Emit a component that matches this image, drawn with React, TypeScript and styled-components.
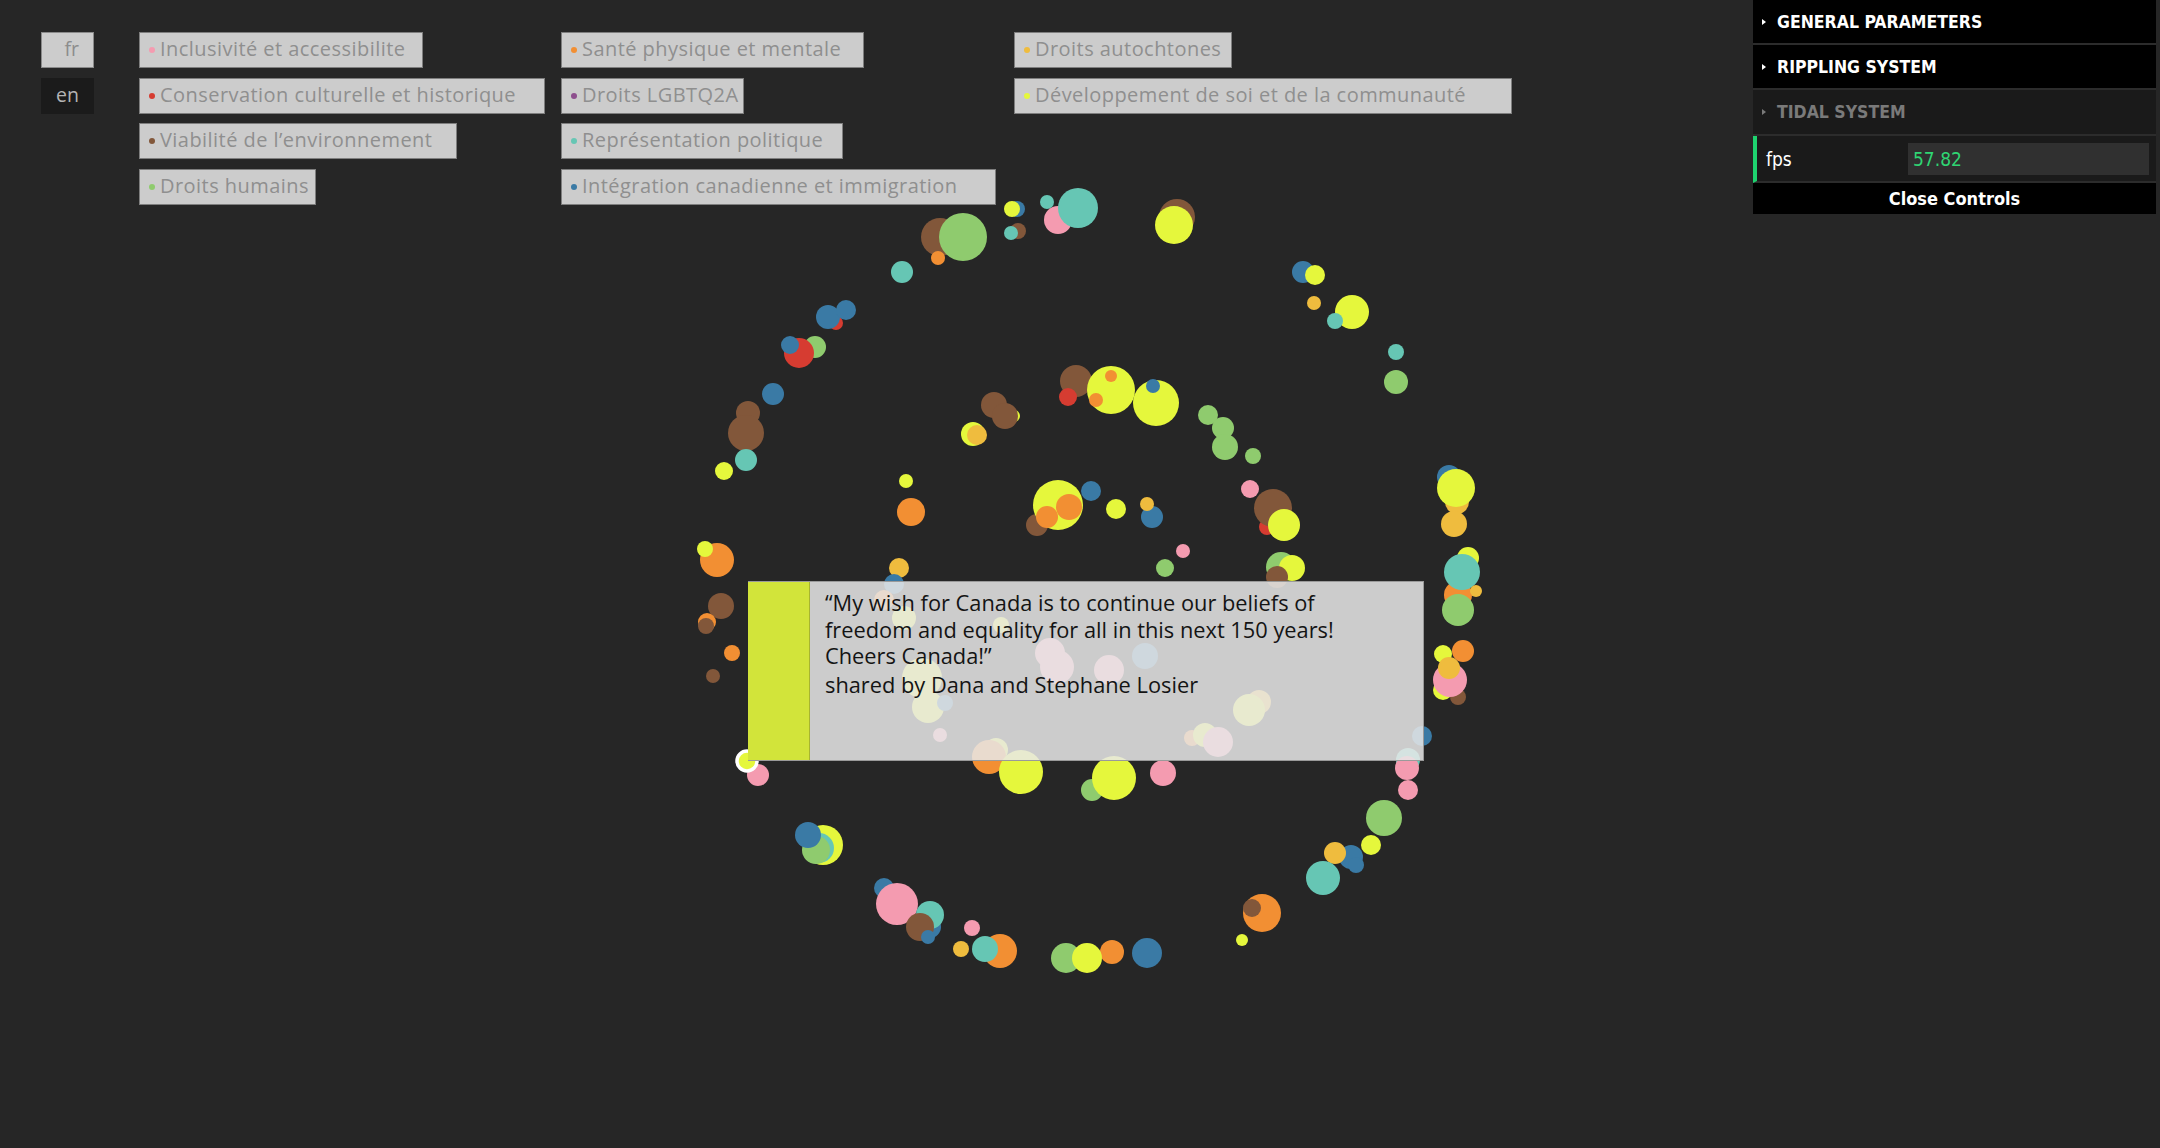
import React from 'react';
import styled, { createGlobalStyle } from 'styled-components';

// --- Global ---

const GlobalStyle = createGlobalStyle`
  html, body {
    margin: 0;
    padding: 0;
    background: #262626;
  }
  * { box-sizing: border-box; }
`;

// --- Palette used by the categories and bubbles ---

const C: Record<string, string> = {
  Y: '#e5f73c', // développement
  P: '#f49bb0', // inclusivité
  T: '#66c6b4', // représentation
  G: '#8fcb6e', // droits humains
  B: '#3a7aa5', // intégration
  N: '#82573a', // environnement
  O: '#f28f33', // santé
  A: '#efbc3e', // autochtones
  R: '#d63c31', // conservation
  V: '#8e4f8e', // lgbtq2a
};

// --- Layout ---

const Page = styled.main`
  position: relative;
  width: 100%;
  height: 100vh;
  overflow: hidden;
  background: #262626;
`;

const TopBar = styled.header`
  position: relative;
  z-index: 2;
  display: flex;
  align-items: flex-start;
  gap: 45px;
  padding: 32px 0 0 41px;
`;

const LangColumn = styled.nav`
  display: flex;
  flex-direction: column;
  gap: 10px;
`;

const LangButton = styled.button<{ $active?: boolean }>`
  width: 53px;
  height: 36px;
  padding: 0 14px 3px 0;
  text-align: right;
  font-family: 'Open Sans', sans-serif;
  font-size: 19.5px;
  border: 1px solid ${(p) => (p.$active ? '#1b1b1b' : '#8a8a8a')};
  background: ${(p) => (p.$active ? '#1b1b1b' : '#cccccc')};
  color: ${(p) => (p.$active ? '#b4b4b4' : '#8c8c8c')};
`;

const TagRow = styled.div`
  display: flex;
`;

const TagColumn = styled.div<{ $width?: number }>`
  display: flex;
  flex-direction: column;
  align-items: flex-start;
  gap: 9.7px;
  width: ${(p) => (p.$width ? `${p.$width}px` : 'auto')};
  flex: none;
`;

const Tag = styled.button<{ $w: number }>`
  display: flex;
  align-items: center;
  gap: 5px;
  width: ${(p) => p.$w}px;
  height: 36px;
  padding: 0 0 3px 9px;
  background: #cccccc;
  border: 1px solid #7e7e7e;
  font-family: 'Open Sans', sans-serif;
  font-size: 20px;
  letter-spacing: 0.45px;
  color: #8f8f8f;
  white-space: nowrap;
  text-align: left;
`;

const Dot = styled.span<{ $color: string }>`
  width: 6px;
  height: 6px;
  margin-top: 3px;
  border-radius: 50%;
  background: ${(p) => p.$color};
  flex: none;
`;

// the bubble field is drawn like the original canvas
const Field = styled.svg`
  position: absolute;
  left: 0;
  top: 0;
  z-index: 1;
`;

const QuoteCard = styled.article`
  position: absolute;
  z-index: 3;
  left: 748px;
  top: 581px;
  width: 676px;
  height: 180px;
  display: flex;
  border: 1px solid #9a9a9a;
  border-left: none;
`;

const ColorStrip = styled.div<{ $color: string }>`
  width: 62px;
  background: ${(p) => p.$color};
  border-right: 1px solid #a8b52e;
  flex: none;
`;

const QuoteBody = styled.div`
  flex: 1;
  padding: 8px 62px 0 15px;
  background: rgba(232, 232, 232, 0.86);
  font-family: 'Open Sans', sans-serif;
  font-size: 21.8px;
  line-height: 26.7px;
  color: #141414;
`;

const QuoteText = styled.p`
  margin: 0 0 2px;
`;

const Author = styled.p`
  margin: 0;
`;

// --- dat.gui style control panel ---

const Gui = styled.aside`
  position: absolute;
  z-index: 4;
  top: 0;
  right: 4px;
  width: 403px;
  background: #000;
  font-family: 'DejaVu Sans Condensed', 'DejaVu Sans', sans-serif;
  font-stretch: condensed;
`;

const Folder = styled.div<{ $muted?: boolean }>`
  display: flex;
  align-items: center;
  gap: 11px;
  height: ${(p) => (p.$muted ? '46px' : '45px')};
  padding-left: 9px;
  background: ${(p) => (p.$muted ? '#1a1a1a' : '#000')};
  border-bottom: 2px solid #2c2c2c;
  color: ${(p) => (p.$muted ? '#7a7a7a' : '#fff')};
  font-size: 17.5px;
  font-weight: bold;
`;

const Caret = styled.span`
  width: 0;
  height: 0;
  border-top: 3px solid transparent;
  border-bottom: 3px solid transparent;
  border-left: 4px solid currentColor;
`;

const FpsRow = styled.div`
  display: flex;
  align-items: center;
  height: 47px;
  padding: 0 7px 0 9px;
  background: #1a1a1a;
  border-left: 4px solid #1ed36f;
  border-bottom: 2px solid #2c2c2c;
  color: #fff;
  font-size: 19px;
`;

const FpsLabel = styled.span`
  width: 142px;
`;

const FpsValue = styled.div`
  flex: 1;
  height: 32px;
  display: flex;
  align-items: center;
  padding-left: 5px;
  background: #303030;
  color: #2fd573;
  font-size: 19px;
`;

const CloseButton = styled.div`
  height: 31px;
  display: flex;
  align-items: center;
  justify-content: center;
  background: #000;
  color: #fff;
  font-size: 18px;
  font-weight: bold;
`;

// --- Data ---

const columns: { width: number; tags: { label: string; color: string; w: number }[] }[] = [
  {
    width: 422,
    tags: [
      { label: 'Inclusivité et accessibilite', color: C.P, w: 284 },
      { label: 'Conservation culturelle et historique', color: C.R, w: 406 },
      { label: 'Viabilité de l’environnement', color: C.N, w: 318 },
      { label: 'Droits humains', color: C.G, w: 177 },
    ],
  },
  {
    width: 453,
    tags: [
      { label: 'Santé physique et mentale', color: C.O, w: 303 },
      { label: 'Droits LGBTQ2A', color: C.V, w: 183 },
      { label: 'Représentation politique', color: C.T, w: 282 },
      { label: 'Intégration canadienne et immigration', color: C.B, w: 435 },
    ],
  },
  {
    width: 0,
    tags: [
      { label: 'Droits autochtones', color: C.A, w: 218 },
      { label: 'Développement de soi et de la communauté', color: C.Y, w: 498 },
    ],
  },
];

// [colour, x, y, r]
const bubbles: [string, number, number, number][] = [
  // top arc
  ['N', 940, 237, 19], ['G', 963, 237, 24], ['O', 938, 258, 7], ['T', 902, 272, 11],
  ['B', 1017, 209, 8], ['Y', 1012, 209, 8], ['N', 1018, 231, 8], ['T', 1011, 233, 7],
  ['T', 1047, 202, 7], ['P', 1058, 220, 14], ['T', 1078, 208, 20],
  ['N', 1177, 217, 18], ['Y', 1174, 225, 19],
  ['B', 1303, 272, 11], ['Y', 1315, 275, 10], ['A', 1314, 303, 7], ['Y', 1352, 312, 17],
  ['T', 1335, 321, 8], ['T', 1396, 352, 8], ['G', 1396, 382, 12],
  // left arc
  ['R', 836, 323, 7], ['B', 828, 317, 12], ['B', 846, 310, 10], ['G', 815, 347, 11],
  ['R', 799, 353, 15], ['B', 790, 345, 9], ['B', 773, 394, 11], ['N', 748, 413, 12],
  ['N', 746, 433, 18], ['T', 746, 460, 11], ['Y', 724, 471, 9], ['O', 717, 560, 17],
  ['Y', 705, 549, 8], ['N', 721, 606, 13], ['O', 707, 622, 9], ['N', 706, 626, 8],
  ['O', 732, 653, 8], ['N', 713, 676, 7],
  // inner ring
  ['N', 1076, 381, 16], ['Y', 1111, 390, 24], ['O', 1111, 376, 6], ['O', 1096, 400, 7],
  ['R', 1068, 397, 9], ['Y', 1156, 403, 23], ['B', 1153, 386, 7],
  ['Y', 1014, 416, 6], ['N', 994, 405, 13], ['N', 1005, 416, 13],
  ['Y', 973, 434, 12], ['A', 977, 435, 10],
  ['G', 1208, 415, 10], ['G', 1223, 428, 11], ['G', 1225, 447, 13], ['G', 1253, 456, 8],
  ['Y', 906, 481, 7], ['O', 911, 512, 14],
  // middle ring
  ['N', 1037, 525, 11], ['Y', 1058, 505, 25], ['O', 1069, 507, 13], ['O', 1047, 517, 11],
  ['B', 1091, 491, 10], ['Y', 1116, 509, 10], ['B', 1152, 517, 11], ['A', 1147, 504, 7],
  ['P', 1250, 489, 9], ['R', 1267, 527, 8], ['N', 1273, 508, 19], ['Y', 1284, 525, 16],
  ['P', 1183, 551, 7], ['G', 1165, 568, 9],
  ['G', 1281, 567, 15], ['Y', 1292, 568, 13], ['N', 1277, 577, 11],
  ['A', 899, 568, 10], ['B', 894, 584, 10],
  // right arc
  ['B', 1449, 477, 12], ['A', 1457, 502, 12], ['Y', 1456, 488, 19], ['A', 1454, 524, 13],
  ['Y', 1468, 558, 11], ['O', 1458, 595, 14], ['T', 1462, 572, 18], ['A', 1476, 591, 6],
  ['G', 1458, 610, 16], ['Y', 1443, 654, 9], ['O', 1463, 651, 11], ['Y', 1443, 690, 10],
  ['N', 1458, 697, 8], ['P', 1450, 680, 17], ['A', 1449, 668, 11],
  // behind the card
  ['O', 884, 600, 10], ['Y', 904, 618, 12], ['Y', 1001, 625, 8], ['P', 1050, 653, 15],
  ['P', 1057, 667, 17], ['P', 1109, 670, 15], ['B', 1145, 656, 13], ['Y', 922, 678, 20],
  ['Y', 928, 707, 16], ['B', 945, 703, 8], ['P', 940, 735, 7], ['A', 1259, 702, 12],
  ['Y', 1249, 710, 16], ['O', 1192, 738, 8], ['Y', 1205, 735, 12], ['P', 1218, 742, 15],
  ['B', 1422, 736, 10], ['T', 1408, 760, 12], ['Y', 996, 750, 12],
  // lower arc
  ['O', 989, 757, 17], ['Y', 1021, 772, 22], ['G', 1092, 790, 11], ['Y', 1114, 778, 22],
  ['P', 1163, 773, 13], ['P', 1407, 768, 12], ['P', 1408, 790, 10], ['G', 1384, 818, 18],
  ['Y', 1371, 845, 10], ['B', 1351, 857, 12], ['B', 1356, 865, 8], ['A', 1335, 853, 11],
  ['T', 1323, 878, 17], ['O', 1262, 913, 19], ['N', 1252, 908, 9], ['Y', 1242, 940, 6],
  ['B', 1147, 953, 15], ['O', 1112, 952, 12], ['G', 1066, 958, 15], ['Y', 1087, 958, 15],
  ['O', 1000, 951, 17], ['T', 985, 949, 13], ['A', 961, 949, 8], ['P', 972, 928, 8],
  ['B', 884, 888, 10], ['P', 897, 904, 21], ['B', 930, 927, 11], ['T', 930, 915, 14],
  ['N', 920, 927, 14], ['B', 928, 937, 7],
  ['Y', 823, 845, 20], ['T', 819, 848, 15], ['G', 816, 850, 14], ['B', 808, 835, 13],
  ['P', 758, 775, 11],
];

// --- Component ---

export default function App() {
  return (
    <>
      <GlobalStyle />
      <Page>
        <TopBar>
          <LangColumn>
            <LangButton>fr</LangButton>
            <LangButton $active>en</LangButton>
          </LangColumn>
          <TagRow>
            {columns.map((col, i) => (
              <TagColumn key={i} $width={col.width || undefined}>
                {col.tags.map((t) => (
                  <Tag key={t.label} $w={t.w}>
                    <Dot $color={t.color} />
                    {t.label}
                  </Tag>
                ))}
              </TagColumn>
            ))}
          </TagRow>
        </TopBar>

        <Field width="2160" height="1148" viewBox="0 0 2160 1148">
          {bubbles.map(([c, x, y, r], i) => (
            <circle key={i} cx={x} cy={y} r={r} fill={C[c]} />
          ))}
          {/* selected bubble */}
          <circle cx={747} cy={761} r={10} fill={C.Y} stroke="#fff" strokeWidth={3.5} />
        </Field>

        <QuoteCard>
          <ColorStrip $color="#d2e43a" />
          <QuoteBody>
            <QuoteText>
              “My wish for Canada is to continue our beliefs of freedom and equality for all in this next 150
              years! Cheers Canada!”
            </QuoteText>
            <Author>shared by Dana and Stephane Losier</Author>
          </QuoteBody>
        </QuoteCard>

        <Gui>
          <Folder>
            <Caret />
            GENERAL PARAMETERS
          </Folder>
          <Folder>
            <Caret />
            RIPPLING SYSTEM
          </Folder>
          <Folder $muted>
            <Caret />
            TIDAL SYSTEM
          </Folder>
          <FpsRow>
            <FpsLabel>fps</FpsLabel>
            <FpsValue>57.82</FpsValue>
          </FpsRow>
          <CloseButton>Close Controls</CloseButton>
        </Gui>
      </Page>
    </>
  );
}
